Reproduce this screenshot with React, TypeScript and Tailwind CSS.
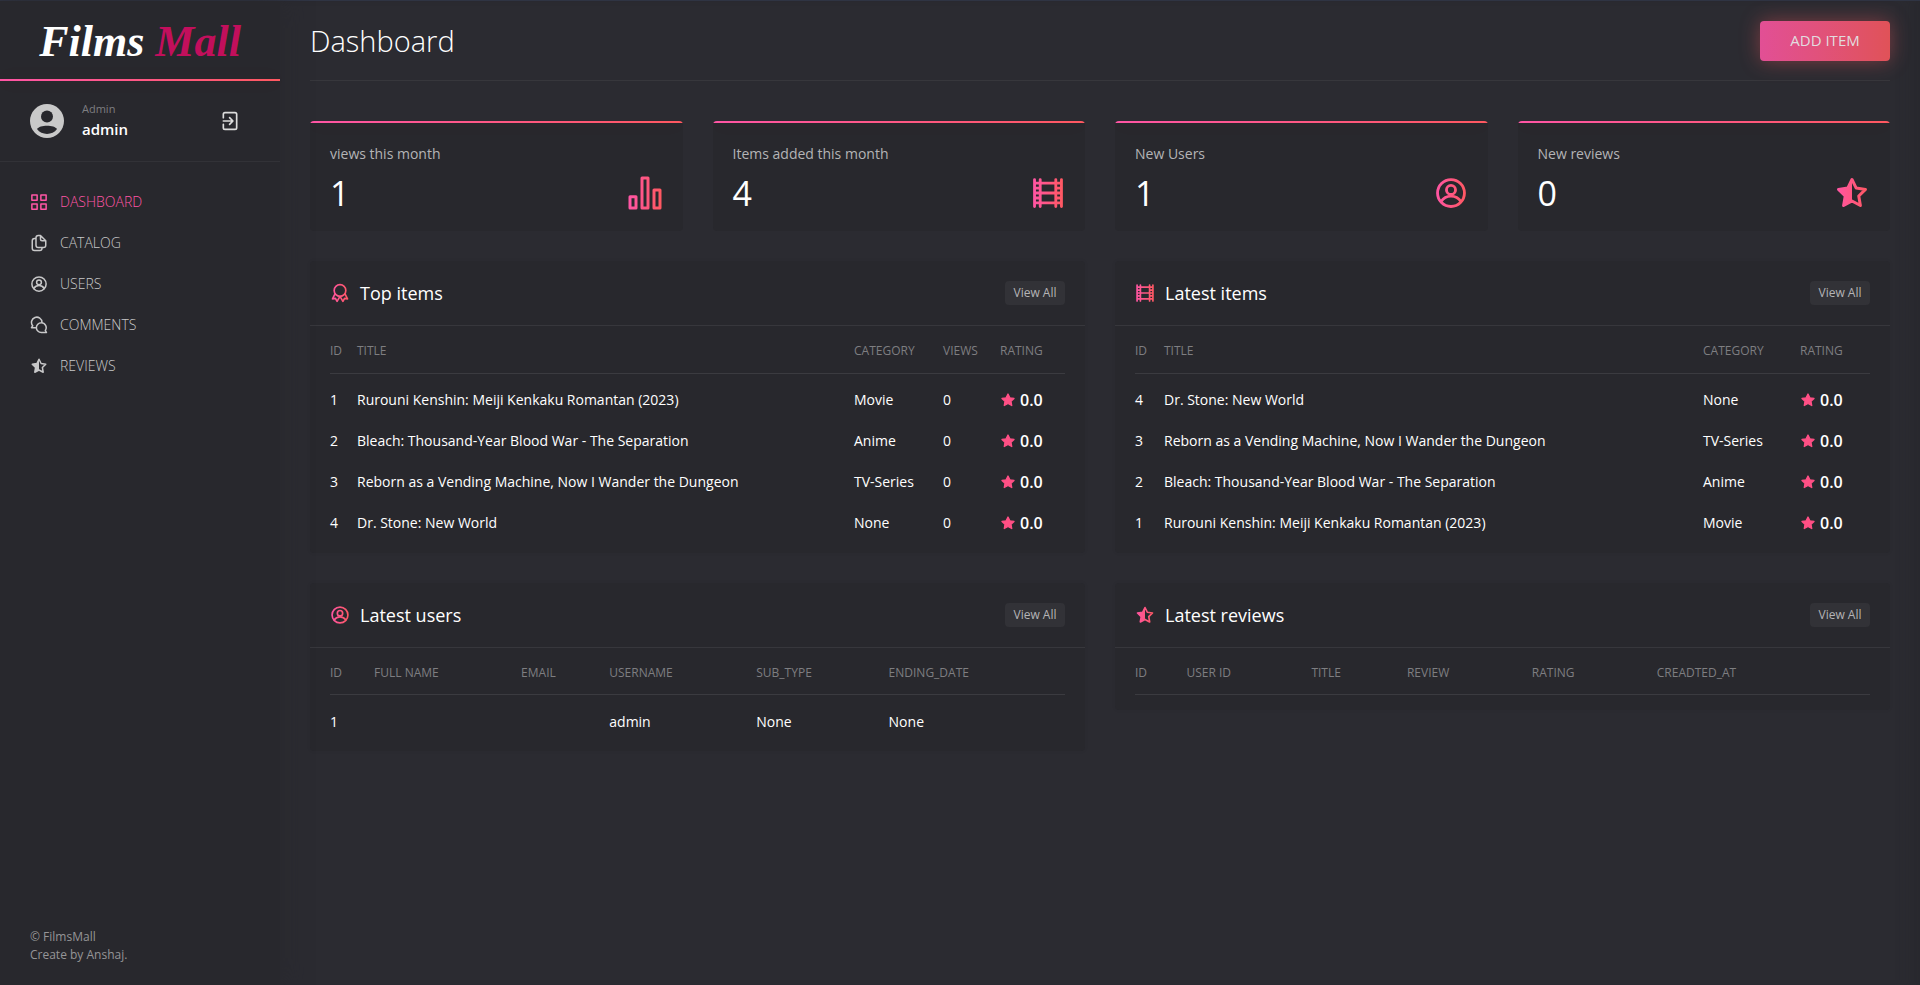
import React from "react";

type IconName = "grid" | "files" | "user" | "comments" | "halfStar" | "chart" | "film" | "award" | "exit";

const stroke = { fill: "none", strokeWidth: 2, strokeLinecap: "round" as const, strokeLinejoin: "round" as const };
const STAR = "M12 3 L14.8 8.7 L21 9.6 L16.5 14 L17.6 20.3 L12 17.3 L6.4 20.3 L7.5 14 L3 9.6 L9.2 8.7 Z";

function shapes(name: IconName) {
  switch (name) {
    case "grid":
      return <path {...stroke} d="M2.500 2.500h7v7h-7zM14.500 2.500h7v7h-7zM14.500 14.500h7v7h-7zM2.500 14.500h7v7h-7z" />;
    case "files":
      return <path {...stroke} d="M14 2h-3a3 3 0 0 0-3 3v10a3 3 0 0 0 3 3h7a3 3 0 0 0 3-3V9zM14 2v5a2 2 0 0 0 2 2h5M8 6H6a3 3 0 0 0-3 3v10a3 3 0 0 0 3 3h7a3 3 0 0 0 3-3v-1" />;
    case "user":
      return (
        <>
          <circle {...stroke} cx="12" cy="12" r="9.5" />
          <circle {...stroke} cx="12" cy="9.800" r="3.200" />
          <path {...stroke} d="M5 18a8.300 8.300 0 0 1 14 0" />
        </>
      );
    case "comments":
      return <path {...stroke} d="M16 8.500A7 7 0 1 0 3.600 13L2 15.500h5M15 9a6.500 6.500 0 1 0 0 13h7l-1.600-2.800A6.500 6.500 0 0 0 15 9z" />;
    case "halfStar":
      return (
        <>
          <path {...stroke} d={STAR} />
          <path stroke="none" d="M12 3v14.3l-5.6 3L7.5 14 3 9.6l6.2-.9z" />
        </>
      );
    case "chart":
      return <path {...stroke} d="M2 14.5h4V22H2zM10 2h4v20h-4zM18 10h4v12h-4z" />;
    case "film":
      return <path {...stroke} d="M2.500 2.500v19M6.500 2.500v19M17.500 2.500v19M21.500 2.500v19M6.500 5h11M6.500 12h11M6.500 19h11M2.500 5h4M2.500 8.500h4M2.500 12h4M2.500 15.500h4M2.500 19h4M17.500 5h4M17.500 8.500h4M17.500 12h4M17.500 15.500h4M17.500 19h4" />;
    case "award":
      return (
        <>
          <circle {...stroke} cx="12" cy="9" r="7" />
          <path {...stroke} d="M6 13l-3 6 3.500-.5L8.500 22 12 16l3.500 6 2-3.500 3.500.5-3-6" />
        </>
      );
    case "exit":
      return <path {...stroke} d="M4 8V4a2 2 0 0 1 2-2h12a2 2 0 0 1 2 2v16a2 2 0 0 1-2 2H6a2 2 0 0 1-2-2v-4M4 12h11M11.500 8l4 4-4 4" />;
  }
}

function Icon({ name, className, gradient }: { name: IconName; className: string; gradient?: boolean }) {
  const id = React.useId();
  const paint = gradient ? `url(#${id})` : "currentColor";
  return (
    <svg viewBox="0 0 24 24" className={className} fill={paint} stroke={paint} aria-hidden="true">
      {gradient && (
        <linearGradient id={id} gradientUnits="userSpaceOnUse" x1="1" y1="0" x2="23" y2="0">
          <stop offset="0" stopColor="#ff55a5" />
          <stop offset="1" stopColor="#ff5860" />
        </linearGradient>
      )}
      {shapes(name)}
    </svg>
  );
}

const nav: { label: string; icon: IconName }[] = [
  { label: "DASHBOARD", icon: "grid" },
  { label: "CATALOG", icon: "files" },
  { label: "USERS", icon: "user" },
  { label: "COMMENTS", icon: "comments" },
  { label: "REVIEWS", icon: "halfStar" },
];

const stats: { label: string; value: number; icon: IconName; size: string }[] = [
  { label: "views this month", value: 1, icon: "chart", size: "size-9" },
  { label: "Items added this month", value: 4, icon: "film", size: "size-[34px]" },
  { label: "New Users", value: 1, icon: "user", size: "size-[34px]" },
  { label: "New reviews", value: 0, icon: "halfStar", size: "size-9" },
];

function Rating() {
  return (
    <span className="flex items-center gap-1 text-base font-semibold">
      <svg viewBox="0 0 24 24" className="size-4" fill="#ff5085" stroke="#ff5085" strokeWidth="2" strokeLinejoin="round" aria-hidden="true">
        <path d={STAR} />
      </svg>
      0.0
    </span>
  );
}

type Column = { label: string; width: string };

function Panel({ title, icon, columns, rows }: { title: string; icon: IconName; columns: Column[]; rows: React.ReactNode[][] }) {
  return (
    <section className="self-start rounded bg-[#28282d] pb-[9px] shadow-[0_0_4px_rgba(0,0,0,0.05)]">
      <div className="box-content flex h-16 items-center border-b border-[#37373c] px-5">
        <Icon name={icon} gradient className="size-5" />
        <h2 className="ml-2.5 text-lg text-white">{title}</h2>
        <a href="#" className="ml-auto flex h-6 w-[60px] items-center justify-center rounded bg-[#323237] text-xs text-[#b4b4b6]">View All</a>
      </div>
      <div className="px-5">
        <table className="w-full table-fixed border-collapse text-left text-sm text-white">
          <thead>
            <tr className="border-b border-[#3b3b40]">
              {columns.map((c) => (
                <th key={c.label} scope="col" className={`${c.width} h-[47px] p-0 pt-1 text-xs font-normal text-[#7e7e81]`}>{c.label}</th>
              ))}
            </tr>
          </thead>
          <tbody className="before:block before:h-1.5 before:content-['']">
            {rows.map((row, i) => (
              <tr key={i}>
                {row.map((cell, j) => (
                  <td key={j} className="h-[41px] p-0 whitespace-nowrap">{cell}</td>
                ))}
              </tr>
            ))}
          </tbody>
        </table>
      </div>
    </section>
  );
}

const RURO = "Rurouni Kenshin: Meiji Kenkaku Romantan (2023)";
const BLEACH = "Bleach: Thousand-Year Blood War - The Separation";
const REBORN = "Reborn as a Vending Machine, Now I Wander the Dungeon";
const STONE = "Dr. Stone: New World";

export default function App() {
  return (
    <div className="flex min-h-screen border-t border-[#2f3443] bg-[#2b2b31] font-['Open_Sans','Noto_Sans',sans-serif]">
      <aside className="relative flex w-[280px] shrink-0 flex-col bg-[#28282d] shadow-[0_0_24px_rgba(40,40,45,0.9)]">
        <a href="#" className="flex h-[78px] items-center justify-center pt-1 font-['Liberation_Serif',serif] text-[44px] leading-none font-bold italic text-white">
          <span>Films <span className="text-[#c20f5c]">Mall</span></span>
        </a>
        <div className="h-0.5 bg-linear-to-r from-[#ff55a5] to-[#ff5860] shadow-[0_0_20px_rgba(255,88,96,0.1)]" />
        <div className="flex h-[81px] items-center border-b border-[#323237] pr-10 pl-[30px]">
          <svg viewBox="0 0 34 34" className="size-[34px]" aria-hidden="true">
            <circle cx="17" cy="17" r="17" fill="#c9c9c9" />
            <circle cx="17" cy="12.500" r="6" fill="#28282d" />
            <path d="M7 25c2.500-4.500 17.500-4.500 20 0-4.500 6.500-15.500 6.500-20 0z" fill="#28282d" />
          </svg>
          <div className="ml-[18px]">
            <p className="text-[11px] leading-4 text-[#7e7e81]">Admin</p>
            <p className="text-[15px] leading-6 font-semibold text-white">admin</p>
          </div>
          <button aria-label="Sign out" className="ml-auto text-[#dcdcdc]"><Icon name="exit" className="size-5" /></button>
        </div>
        <nav className="flex flex-col pt-[19px]">
          {nav.map((n, i) => (
            <a key={n.label} href="#" className={`flex h-[41px] items-center gap-3 pl-[30px] text-sm font-light ${i === 0 ? "text-[#ff55a5]" : "text-[#c8c8c9]"}`}>
              <Icon name={n.icon} className="size-[18px]" />
              {n.label}
            </a>
          ))}
        </nav>
        <footer className="mt-auto pb-[21px] pl-[30px] text-xs leading-[18px] text-[#959597]">
          <p>© FilmsMall</p>
          <p>Create by Anshaj.</p>
        </footer>
      </aside>

      <main className="min-w-0 flex-1 px-[30px] shadow-[inset_-20px_0_16px_-14px_rgba(40,40,45,0.9)]">
        <header className="flex h-20 items-center justify-between border-b border-[#37373c]">
          <h1 className="text-[29px] font-light text-white">Dashboard</h1>
          <button className="h-10 w-[130px] rounded bg-linear-to-r from-[#e24f95] to-[#e05258] text-[15px] font-medium text-[#e2dcdf] shadow-[0_0_20px_rgba(255,88,96,0.4)]">ADD ITEM</button>
        </header>
        <div className="mt-10 grid grid-cols-4 gap-[30px]">
          {stats.map((s) => (
            <section key={s.label} className="h-[110px] overflow-hidden rounded bg-[#28282d]">
              <div className="h-0.5 bg-linear-to-r from-[#ff55a5] to-[#ff5860] shadow-[0_0_20px_rgba(255,88,96,0.1)]" />
              <div className="px-5 pt-[21px]">
                <p className="text-sm text-[#b4b4b6]">{s.label}</p>
                <div className="flex h-[58px] items-center justify-between">
                  <p className="text-[34px] leading-none text-white">{s.value}</p>
                  <Icon name={s.icon} gradient className={s.size} />
                </div>
              </div>
            </section>
          ))}
        </div>
        <div className="mt-[30px] grid grid-cols-2 gap-[30px] pb-[30px]">
          <Panel
            title="Top items"
            icon="award"
            columns={[{ label: "ID", width: "w-[27px]" }, { label: "TITLE", width: "w-auto" }, { label: "CATEGORY", width: "w-[89px]" }, { label: "VIEWS", width: "w-[57px]" }, { label: "RATING", width: "w-[65px]" }]}
            rows={[[1, RURO, "Movie", 0, <Rating />], [2, BLEACH, "Anime", 0, <Rating />], [3, REBORN, "TV-Series", 0, <Rating />], [4, STONE, "None", 0, <Rating />]]}
          />
          <Panel
            title="Latest items"
            icon="film"
            columns={[{ label: "ID", width: "w-[29px]" }, { label: "TITLE", width: "w-auto" }, { label: "CATEGORY", width: "w-[97px]" }, { label: "RATING", width: "w-[70px]" }]}
            rows={[[4, STONE, "None", <Rating />], [3, REBORN, "TV-Series", <Rating />], [2, BLEACH, "Anime", <Rating />], [1, RURO, "Movie", <Rating />]]}
          />
          <Panel
            title="Latest users"
            icon="user"
            columns={[{ label: "ID", width: "w-[6%]" }, { label: "FULL NAME", width: "w-[20%]" }, { label: "EMAIL", width: "w-[12%]" }, { label: "USERNAME", width: "w-[20%]" }, { label: "SUB_TYPE", width: "w-[18%]" }, { label: "ENDING_DATE", width: "w-[24%]" }]}
            rows={[[1, "", "", "admin", "None", "None"]]}
          />
          <Panel
            title="Latest reviews"
            icon="halfStar"
            columns={[{ label: "ID", width: "w-[7%]" }, { label: "USER ID", width: "w-[17%]" }, { label: "TITLE", width: "w-[13%]" }, { label: "REVIEW", width: "w-[17%]" }, { label: "RATING", width: "w-[17%]" }, { label: "CREADTED_AT", width: "w-[29%]" }]}
            rows={[]}
          />
        </div>
      </main>
    </div>
  );
}
